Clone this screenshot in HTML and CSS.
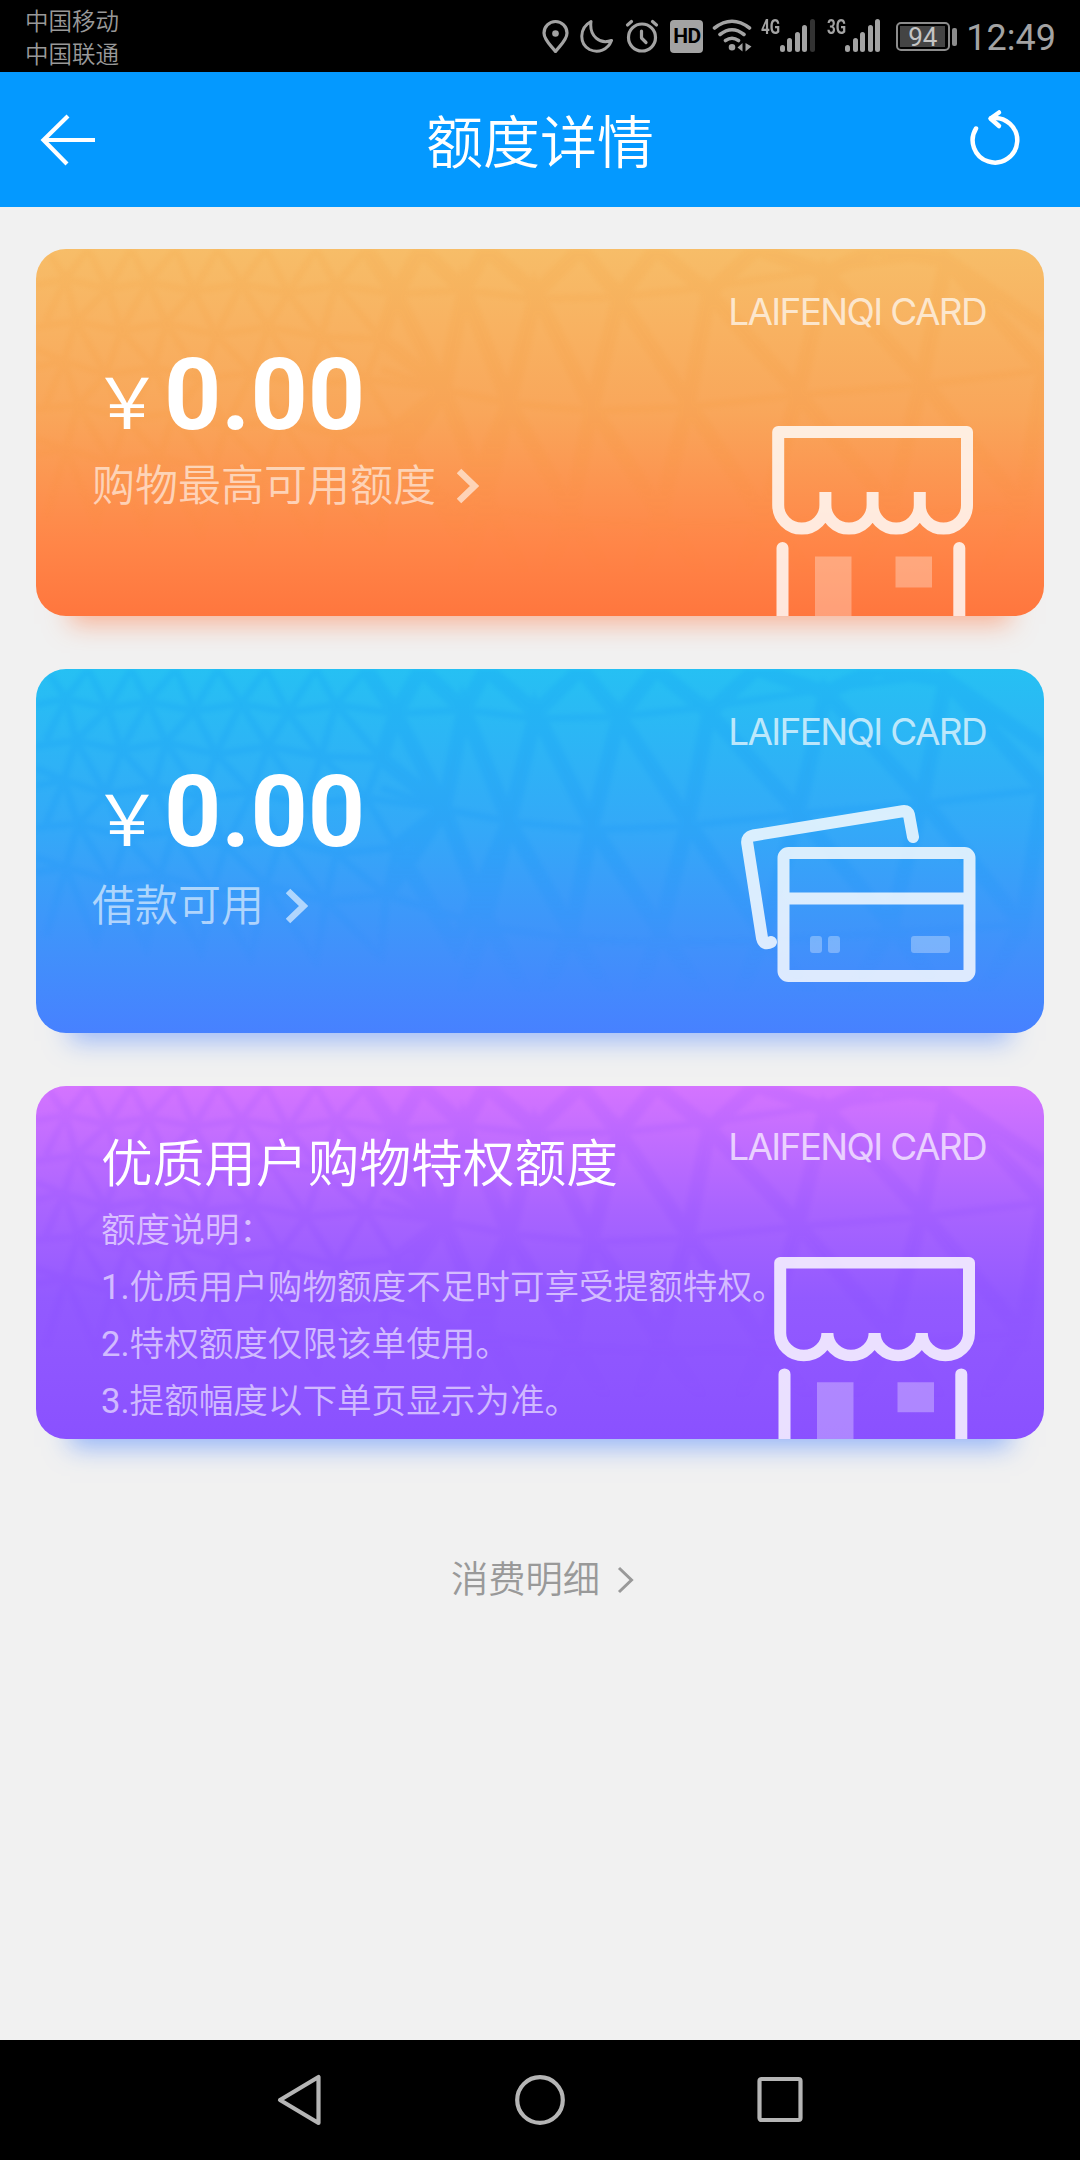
FILE: index.html
```html
<!DOCTYPE html>
<html lang="zh-CN">
<head>
    <meta charset="UTF-8">
    <meta name="viewport" content="width=device-width, initial-scale=1.0">
    <title>额度详情</title>
    <link rel="stylesheet" href="styles.css">
</head>
<body>
    <!-- Shared shapes -->
    <svg class="defs" width="0" height="0">
        <symbol id="mesh" viewBox="0 0 1008 367" preserveAspectRatio="none">
            <g fill="none" stroke="currentColor">
                <g stroke-width="7">
                    <path d="M0 36 L30 30 72 40 112 33 158 42 205 35 252 44 300 36 360 45"/>
                    <path d="M0 78 L40 72 85 82 130 74 180 86 232 78 285 88 345 90 408 141"/>
                    <path d="M0 118 L28 112 70 126 118 118 166 130 216 124 270 136 330 130 408 141"/>
                    <path d="M0 160 L42 156 90 170 138 164 190 178 245 172 300 186 360 180"/>
                    <path d="M0 205 L30 200 76 214 124 208 176 224 230 218 290 234 350 228"/>
                    <path d="M10 0 L30 30 52 0 72 40 95 0 112 33 140 0 158 42 182 0 205 35 230 0 252 44 280 0 300 36 330 0 360 45"/>
                    <path d="M10 72 L30 30 40 72 72 40 85 82 112 33 130 74 158 42 180 86 205 35 232 78 252 44 285 88 300 36 345 90 360 45"/>
                    <path d="M0 100 L28 112 40 72 70 126 85 82 118 118 130 74 166 130 180 86 216 124 232 78 270 136 285 88 330 130 345 90"/>
                    <path d="M10 156 L28 112 42 156 70 126 90 170 118 118 138 164 166 130 190 178 216 124 245 172 270 136 300 186 330 130 360 180"/>
                    <path d="M0 190 L30 200 42 156 76 214 90 170 124 208 138 164 176 224 190 178 230 218 245 172 290 234 300 186 350 228 360 180"/>
                    <path d="M10 270 L30 200 60 275 76 214 110 280 124 208 165 285 176 224 215 290 230 218 280 295 290 234 345 290 350 228"/>
                </g>
                <g stroke-width="15">
                    <path d="M360 45 L345 90 408 141 360 180 420 280 473 154"/>
                    <path d="M330 0 L360 45 385 0 428 41 450 0 500 44 545 0 583 48 620 0 673 44 720 0 790 24 840 0 910 11 1008 80"/>
                    <path d="M360 45 L408 141 428 41 473 154 500 44 556 158 583 48 652 154 673 44 762 144 790 24 886 131 910 11 1008 121"/>
                    <path d="M350 228 L408 141 450 250 473 154 535 264 556 158 624 264 652 154 728 268 762 144 855 258 886 131 986 258 1008 121"/>
                    <path d="M420 350 L450 250 500 350 535 264 590 360 624 264 690 360 728 268 800 360 855 258 930 360 986 258"/>
                </g>
                <g stroke-width="7">
                    <path d="M360 45 L428 41 500 50 583 48 673 38 790 20 910 5"/>
                    <path d="M345 120 L408 141 473 154 556 162 652 158 762 146 886 136 1008 121"/>
                    <path d="M350 228 L450 260 535 272 624 276 728 274 855 266 986 258"/>
                </g>
            </g>
        </symbol>
        <symbol id="store" viewBox="0 0 202 190" preserveAspectRatio="none">
            <g fill="none" stroke="#fff" stroke-opacity=".82" stroke-width="12">
                <path stroke-linejoin="round" d="M53.400 79 A23.600 23.600 0 0 1 6.200 79 V6 H195 V79 A23.600 23.600 0 0 1 147.800 79 M147.800 79 A23.600 23.600 0 0 1 100.600 79 M100.600 79 A23.600 23.600 0 0 1 53.400 79"/>
                <path stroke-linecap="round" d="M10.500 200 V122 M187.300 200 V122"/>
            </g>
            <path fill="#fff" fill-opacity=".3" d="M43 130.500h36.500v65h-36.500z M123.500 130.500h36.500v31h-36.500z"/>
        </symbol>
        <symbol id="store-folds" viewBox="0 0 202 190" preserveAspectRatio="none">
            <path fill="none" stroke="#fff" stroke-opacity=".82" stroke-width="12" d="M53.400 79 V66 M100.600 79 V66 M147.800 79 V66"/>
        </symbol>
        <symbol id="bank-card" viewBox="0 0 236 178">
            <g opacity=".82" fill="none" stroke="#fff" stroke-width="12" stroke-linecap="round" stroke-linejoin="round">
                <path d="M172 32 L168 10 Q166.500 5.500 161.500 6.200 L12 30.500 Q5.500 32 6.200 38 L21 133 Q23 141 30 137"/>
                <rect x="42.500" y="48" width="186" height="123" rx="5"/>
                <path stroke-linecap="butt" d="M48 93.500H223"/>
            </g>
            <g fill="#fff" fill-opacity=".3">
                <rect x="69" y="131" width="12" height="17" rx="3"/>
                <rect x="87" y="131" width="12" height="17" rx="3"/>
                <rect x="170" y="131" width="39" height="17" rx="3"/>
            </g>
        </symbol>
    </svg>

    <!-- Status bar -->
    <div class="status-bar">
        <div class="carriers">
            <span>中国移动</span>
            <span>中国联通</span>
        </div>
        <div class="status-icons">
            <svg class="pin" width="27" height="34" viewBox="0 0 27 34" fill="none" stroke="#a3a3a3" stroke-width="3.200" stroke-linejoin="round">
                <path d="M13.500 32.500 C9 26.500 2 21 2 14 A11.500 11.500 0 0 1 25 14 C25 21 18 26.500 13.500 32.500z"/>
                <circle cx="13.500" cy="14.500" r="3.300" fill="#a3a3a3" stroke="none"/>
            </svg>
            <svg class="moon" width="34" height="34" viewBox="0 0 34 34" fill="none" stroke="#a3a3a3" stroke-width="3" stroke-linejoin="round">
                <path d="M11 2.500 C-1 9 -1 25 9.500 30.500 C18 34.500 28 31 31.500 21.500 C20 26 9 17 11 2.500z"/>
            </svg>
            <svg class="alarm" width="34" height="34" viewBox="0 0 34 34" fill="none" stroke="#a3a3a3" stroke-width="3.200" stroke-linecap="round" stroke-linejoin="round">
                <circle cx="17" cy="18.500" r="13.500"/>
                <path d="M16.500 12v7l4.500 4.500M2.500 6l4-3.500M31.500 6l-4-3.500"/>
            </svg>
            <span class="hd">HD</span>
            <svg class="wifi" width="41" height="34" viewBox="0 0 41 34" fill="none" stroke="#a3a3a3" stroke-width="3.600" stroke-linecap="round">
                <path d="M2.500 9 Q20 -4.500 37.500 9M8 15.500 Q20 6 32 15.500M13.500 21.500 Q20 17 26.500 21.500"/>
                <path stroke="none" fill="#a3a3a3" d="M20 25a3.300 3.300 0 1 1 0 6.600a3.300 3.300 0 0 1 0-6.600z M30.500 24v8.500l-5-4z M33.500 24v8.500l6-5z"/>
            </svg>
            <div class="signal signal-4g">
                <span>4G</span>
                <i class="b1"></i><i class="b2"></i><i class="b3"></i><i class="b4"></i><i class="b5 off"></i>
            </div>
            <div class="signal signal-3g">
                <span>3G</span>
                <i class="b1"></i><i class="b2"></i><i class="b3"></i><i class="b4"></i><i class="b5"></i>
            </div>
            <div class="battery"><span>94</span></div>
            <i class="battery-tip"></i>
            <span class="time">12:49</span>
        </div>
    </div>

    <!-- Header -->
    <header class="header">
        <svg width="56" height="52" viewBox="0 0 56 52" fill="none" stroke="#fff" stroke-width="4.200">
            <path d="M28 2 L3.500 26 L27 50M3.500 26H55"/>
        </svg>
        <h1>额度详情</h1>
        <svg class="refresh" width="52" height="58" viewBox="0 0 52 58" fill="none" stroke="#fff" stroke-width="4.500" stroke-linecap="round" stroke-linejoin="round">
            <path d="M7 20.500 A22.300 22.300 0 1 0 22 10.300"/>
            <path d="M30 4.500 L21.500 10.500 L30 18"/>
        </svg>
    </header>

    <main class="content">
        <section class="card shopping">
            <svg class="mesh"><use href="#mesh"/></svg>
            <div class="info">
                <div class="amount"><span class="yen">￥</span>0.00</div>
                <div class="label">
                    购物最高可用额度
                    <svg width="22" height="36" viewBox="0 0 22 36"><path d="M2 3 L17.500 18 L2 33"/></svg>
                </div>
            </div>
            <div class="side">
                <div class="brand">LAIFENQI CARD</div>
                <svg class="store"><use href="#store"/><use href="#store-folds"/></svg>
            </div>
        </section>

        <section class="card loan">
            <svg class="mesh"><use href="#mesh"/></svg>
            <div class="info">
                <div class="amount"><span class="yen">￥</span>0.00</div>
                <div class="label">
                    借款可用
                    <svg width="22" height="36" viewBox="0 0 22 36"><path d="M2 3 L17.500 18 L2 33"/></svg>
                </div>
            </div>
            <div class="side">
                <div class="brand">LAIFENQI CARD</div>
                <svg class="bank-card"><use href="#bank-card"/></svg>
            </div>
        </section>

        <section class="card vip">
            <svg class="mesh"><use href="#mesh"/></svg>
            <div class="info">
                <h2>优质用户购物特权额度</h2>
                <div class="rules">
                    <p>额度说明：</p>
                    <p><span class="num">1.</span>优质用户购物额度不足时可享受提额特权。</p>
                    <p><span class="num">2.</span>特权额度仅限该单使用。</p>
                    <p><span class="num">3.</span>提额幅度以下单页显示为准。</p>
                </div>
            </div>
            <div class="side">
                <div class="brand">LAIFENQI CARD</div>
                <svg class="store"><use href="#store"/></svg>
            </div>
        </section>

        <div class="detail-link">
            消费明细
            <svg width="18" height="28" viewBox="0 0 18 28"><path d="M2 2 L14.500 14 L2 26"/></svg>
        </div>
    </main>

    <!-- System navigation -->
    <nav class="nav-bar">
        <svg width="50" height="54" viewBox="0 0 50 54"><path d="M43.500 4 V50 L5 27z"/></svg>
        <svg width="54" height="54" viewBox="0 0 54 54"><circle cx="27" cy="27" r="22.800"/></svg>
        <svg width="50" height="54" viewBox="0 0 50 54"><rect x="4.500" y="6" width="41" height="41" rx="2"/></svg>
    </nav>
</body>
</html>
```

FILE: styles.css
```css
* {
    box-sizing: border-box;
    margin: 0;
    padding: 0;
}
body {
    display: flex;
    flex-direction: column;
    width: 1080px;
    height: 2160px;
    overflow: hidden;
    font-family: Roboto, "Noto Sans CJK SC", sans-serif;
    font-weight: 350;
    background: #f1f1f1;
    color: #fff;
}
svg {
    display: block;
    flex: none;
}
.defs {
    position: absolute;
}

/* Status bar */
.status-bar {
    display: flex;
    justify-content: space-between;
    height: 72px;
    padding: 0 24px 0 25px;
    background: #000;
    color: #a3a3a3;
}
.carriers {
    display: flex;
    flex-direction: column;
    padding-top: 6px;
    font-size: 23.5px;
    line-height: 33px;
    color: #999;
}
.status-icons {
    display: flex;
    align-items: flex-start;
    padding-top: 19px;
    font-weight: 400;
}
.pin,
.moon,
.alarm {
    margin-right: 11px;
}
.hd {
    width: 33px;
    height: 33px;
    margin: 1px 9px 0 0;
    border-radius: 4px;
    background: #a3a3a3;
    color: #000;
    font-size: 21px;
    font-weight: 700;
    line-height: 33px;
    letter-spacing: -0.5px;
    text-align: center;
}
.wifi {
    margin-right: 8px;
}
.signal {
    display: flex;
    align-items: flex-end;
    gap: 2.6px;
    height: 33px;
}
.signal span {
    align-self: flex-start;
    width: 19px;
    margin-right: -3.5px;
    font-size: 20px;
    font-weight: 700;
    line-height: 17px;
    transform: scaleX(0.76);
    transform-origin: left;
}
.signal i {
    width: 5px;
    border-radius: 2.5px;
    background: #a3a3a3;
}
.signal .off {
    background: #333;
}
.b1 { height: 7px; }
.b2 { height: 14px; }
.b3 { height: 20px; }
.b4 { height: 27px; }
.b5 { height: 33px; }
.signal-4g {
    margin-right: 12px;
}
.signal-3g {
    margin-right: 16px;
}
.battery {
    width: 54px;
    height: 29px;
    margin-top: 3px;
    padding: 2px;
    border: 2px solid #8c8c8c;
    border-radius: 5px;
}
.battery span {
    display: block;
    width: 45px;
    height: 21px;
    background: #444;
    color: #c4c4c4;
    font-size: 26px;
    line-height: 22px;
    text-align: center;
}
.battery-tip {
    width: 5px;
    height: 18px;
    margin: 9px 9px 0 2px;
    border-radius: 2px;
    background: #8c8c8c;
}
.time {
    font-size: 36px;
    line-height: 38px;
    color: #a3a3a3;
}

/* Header */
.header {
    display: flex;
    align-items: center;
    justify-content: space-between;
    height: 135px;
    padding: 0 59px 0 40px;
    background: #0499ff;
}
.header h1 {
    padding: 9px 0 0 15px;
    font-size: 57px;
    font-weight: 350;
    line-height: 80px;
}
.refresh {
    margin-bottom: 5px;
}

/* Cards */
.content {
    flex: 1;
    padding: 42px 36px 0;
}
.card {
    position: relative;
    display: flex;
    justify-content: space-between;
    border-radius: 30px;
}
.card .mesh {
    position: absolute;
    inset: 0;
    width: 100%;
    height: 100%;
    border-radius: 30px;
    opacity: 0.08;
    filter: blur(2px);
    -webkit-mask-image: linear-gradient(#000 50%, transparent 90%);
    mask-image: linear-gradient(#000 50%, transparent 90%);
}
.info,
.side {
    position: relative;
}
.shopping {
    height: 367px;
    margin-bottom: 53px;
    background: linear-gradient(#f7bd68, #f9a65a 45%, #ff8648 80%, #ff763e);
    box-shadow: 0 42px 24px -34px rgba(255, 118, 62, 0.5);
}
.shopping .mesh {
    color: #f08a20;
}
.loan {
    height: 364px;
    margin-bottom: 53px;
    background: linear-gradient(#26c0f3, #34a8f8 45%, #4190fb 78%, #4781ff);
    box-shadow: 0 42px 24px -34px rgba(71, 129, 255, 0.5);
}
.loan .mesh {
    color: #0088f5;
    opacity: 0.12;
}
.vip {
    height: 353px;
    background: linear-gradient(#d474ff, #a964ff 35%, #935aff 60%, #8a51ff);
    box-shadow: 0 42px 24px -34px rgba(71, 129, 255, 0.55);
}
.vip .mesh {
    color: #6c2cff;
}
.info {
    padding: 91px 0 0 56px;
}
.loan .info {
    padding-top: 88px;
}
.amount {
    display: flex;
    align-items: baseline;
    height: 110px;
    font-size: 100px;
    font-weight: 700;
    line-height: 110px;
}
.yen {
    margin-right: 2px;
    font-size: 70px;
    font-weight: 400;
    font-family: "Noto Sans CJK SC", sans-serif;
    line-height: 70px;
}
.label {
    display: flex;
    align-items: center;
    gap: 21px;
    height: 60px;
    margin-top: 6px;
    font-size: 43px;
    line-height: 60px;
    color: rgba(255, 255, 255, 0.6);
}
.loan .label {
    gap: 22px;
    margin-top: 9px;
}
.label svg path {
    fill: none;
    stroke: rgba(255, 255, 255, 0.6);
    stroke-width: 6.5;
}
.side {
    display: flex;
    flex-direction: column;
    align-items: flex-end;
    justify-content: space-between;
    padding: 40px 70px 0 0;
}
.brand {
    margin-right: -12px;
    font-family: Inter, sans-serif;
    font-size: 37px;
    font-weight: 400;
    line-height: 46px;
    letter-spacing: -1.65px;
    white-space: nowrap;
    color: rgba(255, 255, 255, 0.7);
}
.store {
    width: 202px;
    height: 190px;
}
.loan .side {
    padding-bottom: 50px;
}
.bank-card {
    width: 236px;
    height: 178px;
    margin-right: -3px;
}
.vip .info {
    padding: 44px 0 0 65px;
}
.vip h2 {
    font-size: 51.7px;
    font-weight: 350;
    line-height: 70px;
}
.rules {
    width: 690px;
    margin: 2px -100px 0 0;
    font-size: 34.6px;
    line-height: 57px;
    color: rgba(255, 255, 255, 0.6);
}
.num {
    font-weight: 400;
}
.vip .side {
    padding-top: 38px;
    padding-right: 68px;
}
.vip .brand {
    margin-right: -10px;
}
.vip .store {
    height: 182.5px;
}

.detail-link {
    display: flex;
    align-items: center;
    justify-content: center;
    gap: 17px;
    margin-top: 115px;
    padding-left: 6px;
    font-size: 37.3px;
    line-height: 52px;
    color: #999;
}
.detail-link path {
    fill: none;
    stroke: #999;
    stroke-width: 3;
}

/* System navigation */
.nav-bar {
    display: flex;
    align-items: center;
    justify-content: center;
    gap: 188px;
    height: 120px;
    background: #000;
}
.nav-bar svg {
    fill: none;
    stroke: #b5b5b5;
    stroke-width: 4.2;
    stroke-linejoin: round;
}
```
